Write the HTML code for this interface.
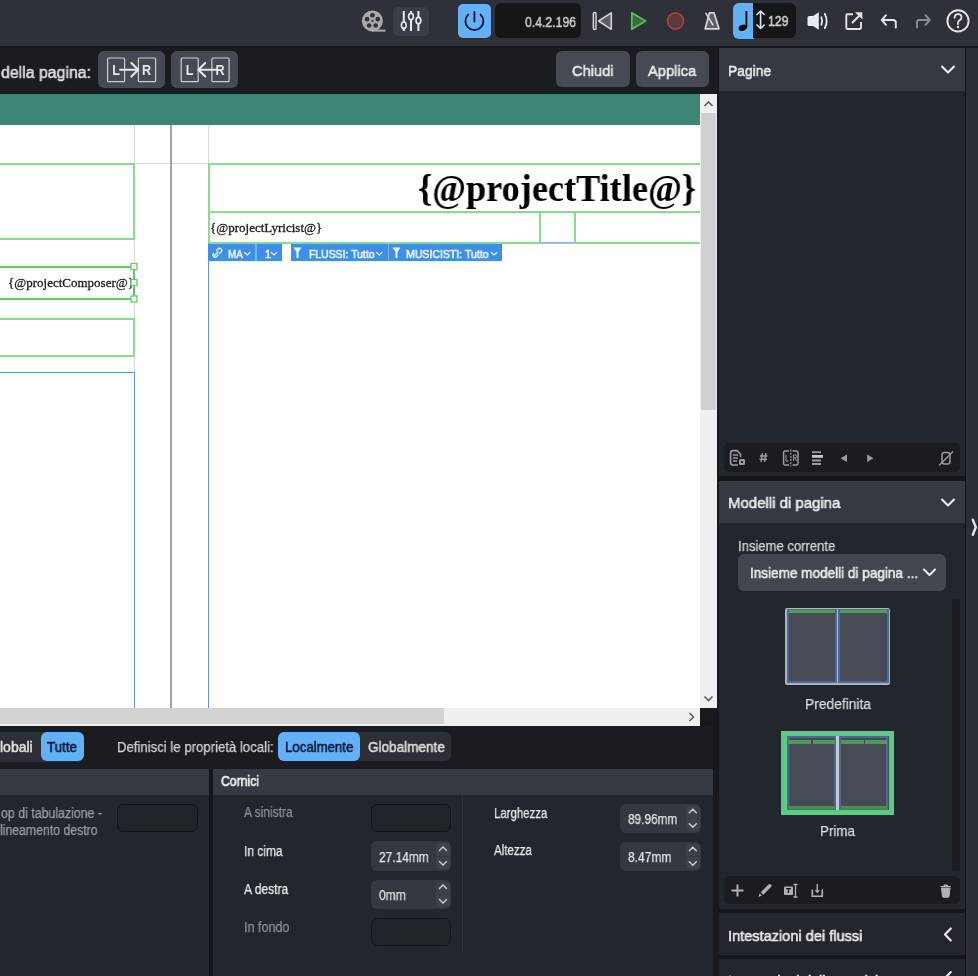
<!DOCTYPE html>
<html><head><meta charset="utf-8">
<style>
*{margin:0;padding:0;box-sizing:border-box}
html,body{width:978px;height:976px;overflow:hidden;background:#1b1d21;font-family:"Liberation Sans",sans-serif;color:#e6e6e6;position:relative}
.a{position:absolute}
.t{position:absolute;white-space:nowrap;line-height:1;transform-origin:0 0;will-change:transform}
svg{position:absolute;overflow:visible;will-change:transform}
</style></head><body>
<div class="a" style="left:0px;top:0px;width:978px;height:46px;background:#2e3138;"></div>
<div class="a" style="left:0px;top:46px;width:978px;height:2.2px;background:#15181b;"></div>
<div class="a" style="left:393px;top:6.5px;width:36px;height:29.5px;background:#3a3e46;border-radius:5px"></div>
<div class="a" style="left:458px;top:3.7px;width:33px;height:34.3px;background:#64b0f7;border-radius:5px"></div>
<div class="a" style="left:495px;top:3.3px;width:86px;height:35.1px;background:#151617;border-radius:6px"></div>
<div class="a" style="left:732.5px;top:2.9px;width:21px;height:36.4px;background:#64b0f7;border-radius:6px 0 0 6px"></div>
<div class="a" style="left:753.2px;top:3.3px;width:43.3px;height:35.1px;background:#151617;border-radius:0 6px 6px 0"></div>
<div class="a" style="left:0px;top:48px;width:717px;height:46px;background:#1a1c20;"></div>
<div class="a" style="left:98px;top:51.4px;width:67px;height:36.2px;background:#454a53;border-radius:6px"></div>
<div class="a" style="left:171.4px;top:51.4px;width:67px;height:36.2px;background:#454a53;border-radius:6px"></div>
<div class="a" style="left:556.2px;top:51.4px;width:73.4px;height:36.1px;background:#454a53;border-radius:6px"></div>
<div class="a" style="left:635.7px;top:51.4px;width:73.3px;height:36.1px;background:#454a53;border-radius:6px"></div>
<div class="a" style="left:0px;top:94px;width:700px;height:31px;background:#3e8576;"></div>
<div class="a" style="left:0px;top:125px;width:700px;height:583px;background:#ffffff;"></div>
<div class="a" style="left:133.5px;top:125px;width:1px;height:583px;background:#dadada;"></div>
<div class="a" style="left:208px;top:125px;width:1px;height:583px;background:#dadada;"></div>
<div class="a" style="left:0px;top:163px;width:700px;height:1px;background:#dadada;"></div>
<div class="a" style="left:170.4px;top:125px;width:1.5px;height:583px;background:#9fa4a4;"></div>
<div class="a" style="left:-5px;top:162.5px;width:140px;height:77.5px;background:transparent;border:2px solid #8cda8c"></div>
<div class="a" style="left:-5px;top:265.6px;width:140.3px;height:34.3px;background:transparent;border:2.3px solid #5ccc5c"></div>
<div class="a" style="left:-5px;top:318px;width:140px;height:38.5px;background:transparent;border:2px solid #8cda8c"></div>
<div class="a" style="left:-5px;top:372px;width:139.6px;height:400px;background:transparent;border:1.7px solid #5b95de"></div>
<div class="a" style="left:207.6px;top:162.5px;width:500px;height:50px;background:transparent;border:2px solid #8cda8c"></div>
<div class="a" style="left:207.6px;top:210.5px;width:500px;height:33.5px;background:transparent;border:2px solid #8cda8c"></div>
<div class="a" style="left:538.8px;top:211px;width:2px;height:32px;background:#8cda8c;"></div>
<div class="a" style="left:573.5px;top:211px;width:2px;height:32px;background:#8cda8c;"></div>
<div class="a" style="left:540.5px;top:241.9px;width:33.4px;height:1.6px;background:#8fb3e8;"></div>
<div class="a" style="left:207.8px;top:243px;width:1.5px;height:470px;background:#5b95de;"></div>
<div class="a" style="left:208.2px;top:244.1px;width:47.2px;height:16.6px;background:#3f8fe8;"></div>
<div class="a" style="left:255.4px;top:244.1px;width:1.6px;height:16.6px;background:#7ab0ee;"></div>
<div class="a" style="left:257px;top:244.1px;width:25.1px;height:16.6px;background:#3f8fe8;"></div>
<div class="a" style="left:290.5px;top:244.1px;width:97px;height:16.6px;background:#3f8fe8;"></div>
<div class="a" style="left:387.5px;top:244.1px;width:1.2px;height:16.6px;background:#7ab0ee;"></div>
<div class="a" style="left:388.7px;top:244.1px;width:113.3px;height:16.6px;background:#3f8fe8;"></div>
<div class="a" style="left:700px;top:94px;width:17px;height:614px;background:#efefef;"></div>
<div class="a" style="left:701px;top:113px;width:15px;height:297px;background:#d0d0d0;"></div>
<div class="a" style="left:717px;top:48px;width:2px;height:690px;background:#17191c;"></div>
<div class="a" style="left:0px;top:708px;width:700px;height:18px;background:#efefef;"></div>
<div class="a" style="left:0px;top:708px;width:444px;height:16px;background:#d3d3d3;"></div>
<div class="a" style="left:700px;top:708px;width:17px;height:18px;background:#181a1a;"></div>
<div class="a" style="left:0px;top:726px;width:719px;height:43px;background:#1a1c20;"></div>
<div class="a" style="left:-10px;top:732px;width:94px;height:29.5px;background:#2c2f36;border-radius:6px"></div>
<div class="a" style="left:41.1px;top:732px;width:42.7px;height:29.3px;background:#64b0f7;border-radius:6px"></div>
<div class="a" style="left:278.2px;top:731.8px;width:172.5px;height:29.7px;background:#2c2f36;border-radius:6px"></div>
<div class="a" style="left:278.2px;top:731.8px;width:82.1px;height:29.7px;background:#64b0f7;border-radius:6px"></div>
<div class="a" style="left:0px;top:769px;width:209px;height:26px;background:#353a42;"></div>
<div class="a" style="left:0px;top:795px;width:209px;height:181px;background:#22262d;"></div>
<div class="a" style="left:209px;top:769px;width:4px;height:207px;background:#141619;"></div>
<div class="a" style="left:213px;top:769px;width:500px;height:26px;background:#353a42;"></div>
<div class="a" style="left:213px;top:795px;width:500px;height:181px;background:#22262d;"></div>
<div class="a" style="left:713px;top:726px;width:6px;height:250px;background:#17191c;"></div>
<div class="a" style="left:462.2px;top:795px;width:1px;height:157px;background:#2f333a;"></div>
<div class="a" style="left:117px;top:804px;width:80.5px;height:28.4px;background:#202328;border:1.6px solid #121417;border-radius:6px"></div>
<div class="a" style="left:371px;top:804.3px;width:80px;height:27.7px;background:#202328;border:1.6px solid #121417;border-radius:6px"></div>
<div class="a" style="left:371px;top:918px;width:80px;height:28.3px;background:#202328;border:1.6px solid #121417;border-radius:6px"></div>
<div class="a" style="left:370.5px;top:841.4px;width:80.5px;height:29.5px;background:#343841;border-radius:6px"></div>
<div class="a" style="left:436.3px;top:843.4px;width:13.5px;height:12.5px;background:#3d4149;border-radius:4px 4px 0 0"></div>
<div class="a" style="left:436.3px;top:856.9px;width:13.5px;height:12px;background:#3d4149;border-radius:0 0 4px 4px"></div>
<div class="a" style="left:370.5px;top:879.6px;width:80.5px;height:29.5px;background:#343841;border-radius:6px"></div>
<div class="a" style="left:436.3px;top:881.6px;width:13.5px;height:12.5px;background:#3d4149;border-radius:4px 4px 0 0"></div>
<div class="a" style="left:436.3px;top:895.1px;width:13.5px;height:12px;background:#3d4149;border-radius:0 0 4px 4px"></div>
<div class="a" style="left:620.3px;top:803.8px;width:80.5px;height:29.5px;background:#343841;border-radius:6px"></div>
<div class="a" style="left:686.0999999999999px;top:805.8px;width:13.5px;height:12.5px;background:#3d4149;border-radius:4px 4px 0 0"></div>
<div class="a" style="left:686.0999999999999px;top:819.3px;width:13.5px;height:12px;background:#3d4149;border-radius:0 0 4px 4px"></div>
<div class="a" style="left:620.3px;top:841.7px;width:80.5px;height:29.5px;background:#343841;border-radius:6px"></div>
<div class="a" style="left:686.0999999999999px;top:843.7px;width:13.5px;height:12.5px;background:#3d4149;border-radius:4px 4px 0 0"></div>
<div class="a" style="left:686.0999999999999px;top:857.2px;width:13.5px;height:12px;background:#3d4149;border-radius:0 0 4px 4px"></div>
<div class="a" style="left:719px;top:48px;width:245.5px;height:43px;background:#353a42;"></div>
<div class="a" style="left:719px;top:91px;width:245.5px;height:385px;background:#22262d;"></div>
<div class="a" style="left:723.6px;top:443.4px;width:236px;height:29.1px;background:#1a1c20;border-radius:5px"></div>
<div class="a" style="left:719px;top:476px;width:245.5px;height:5px;background:#15171a;"></div>
<div class="a" style="left:719px;top:481px;width:245.5px;height:42px;background:#353a42;"></div>
<div class="a" style="left:719px;top:523px;width:245.5px;height:386px;background:#22262d;"></div>
<div class="a" style="left:738px;top:554.3px;width:207.6px;height:36.4px;background:#41464f;border-radius:6px"></div>
<div class="a" style="left:951.7px;top:598.6px;width:8.3px;height:272.2px;background:#1b1d21;"></div>
<div class="a" style="left:724px;top:876px;width:235.7px;height:27.7px;background:#1a1c20;border-radius:5px"></div>
<div class="a" style="left:719px;top:909px;width:245.5px;height:4px;background:#15171a;"></div>
<div class="a" style="left:719px;top:913px;width:245.5px;height:42px;background:#23262d;"></div>
<div class="a" style="left:719px;top:955px;width:245.5px;height:3.6px;background:#16181b;"></div>
<div class="a" style="left:719px;top:958.6px;width:245.5px;height:20px;background:#23262d;"></div>
<div class="a" style="left:964.5px;top:48px;width:1.7px;height:928px;background:#111316;"></div>
<div class="a" style="left:966.2px;top:48px;width:12px;height:928px;background:#2b2e35;"></div>
<div class="a" style="left:785.1px;top:607.6px;width:105.2px;height:77.3px;background:#464b56;border:2px solid #b0b3b8;border-radius:2px"></div>
<div class="a" style="left:836.5px;top:609px;width:2px;height:74px;background:#b8bbbf;"></div>
<div class="a" style="left:786.8px;top:609.4px;width:49.8px;height:73.8px;background:transparent;border:2px solid #4a6a9a"></div>
<div class="a" style="left:838.4px;top:609.4px;width:50.2px;height:73.8px;background:transparent;border:2px solid #4a6a9a"></div>
<div class="a" style="left:788.5px;top:610.4px;width:46.5px;height:3px;background:#4f9d5e;"></div>
<div class="a" style="left:840px;top:610.4px;width:47px;height:3px;background:#4f9d5e;"></div>
<div class="a" style="left:781.4px;top:730.8px;width:112.5px;height:84.3px;background:#5ccb85;"></div>
<div class="a" style="left:786.5px;top:736px;width:102px;height:74px;background:#464b56;"></div>
<div class="a" style="left:836.1px;top:736px;width:2.8px;height:74px;background:#c8c8c8;"></div>
<div class="a" style="left:786.5px;top:736px;width:49.6px;height:74px;background:transparent;border:2px solid #4a6a9a"></div>
<div class="a" style="left:838.9px;top:736px;width:49.6px;height:74px;background:transparent;border:2px solid #4a6a9a"></div>
<div class="a" style="left:788px;top:740px;width:23px;height:3.5px;background:#4e9a5c;"></div>
<div class="a" style="left:812.5px;top:740px;width:22px;height:3.5px;background:#4e9a5c;"></div>
<div class="a" style="left:840.5px;top:740px;width:23px;height:3.5px;background:#4e9a5c;"></div>
<div class="a" style="left:865px;top:740px;width:22px;height:3.5px;background:#4e9a5c;"></div>
<div class="a" style="left:788px;top:806.2px;width:46.5px;height:3.2px;background:#4e8a5c;"></div>
<div class="a" style="left:840.5px;top:806.2px;width:46.5px;height:3.2px;background:#4e8a5c;"></div>
<div class="t" style="left:525.00px;top:13.63px;font-family:'Liberation Sans',sans-serif;font-size:15.5px;font-weight:normal;color:#c8c8c8;-webkit-text-stroke:0.55px currentColor;transform:scaleX(0.7888);">0.4.2.196</div>
<div class="t" style="left:768.10px;top:14.28px;font-family:'Liberation Sans',sans-serif;font-size:14.5px;font-weight:normal;color:#d0d0d0;-webkit-text-stroke:0.55px currentColor;transform:scaleX(0.8429);">129</div>
<div class="t" style="left:0.80px;top:63.77px;font-family:'Liberation Sans',sans-serif;font-size:16.5px;font-weight:normal;color:#dedede;-webkit-text-stroke:0.55px currentColor;transform:scaleX(0.9618);">della pagina:</div>
<div class="t" style="left:571.80px;top:62.73px;font-family:'Liberation Sans',sans-serif;font-size:15.5px;font-weight:normal;color:#ebebeb;-webkit-text-stroke:0.55px currentColor;transform:scaleX(0.9442);">Chiudi</div>
<div class="t" style="left:648.20px;top:62.73px;font-family:'Liberation Sans',sans-serif;font-size:15.5px;font-weight:normal;color:#ebebeb;-webkit-text-stroke:0.55px currentColor;transform:scaleX(0.9480);">Applica</div>
<div class="t" style="left:727.90px;top:63.42px;font-family:'Liberation Sans',sans-serif;font-size:15.5px;font-weight:normal;color:#ebebeb;-webkit-text-stroke:0.55px currentColor;transform:scaleX(0.8909);">Pagine</div>
<div class="t" style="left:418.00px;top:169.99px;font-family:'Liberation Serif',serif;font-size:37px;font-weight:bold;color:#000;transform:scaleX(0.9802);">{@projectTitle@}</div>
<div class="t" style="left:209.70px;top:220.51px;font-family:'Liberation Serif',serif;font-size:13px;font-weight:normal;color:#1a1a1a;-webkit-text-stroke:0.3px #1a1a1a;">{@projectLyricist@}</div>
<div class="t" style="left:7.60px;top:276.01px;font-family:'Liberation Serif',serif;font-size:13px;font-weight:normal;color:#1a1a1a;-webkit-text-stroke:0.3px #1a1a1a;">{@projectComposer@}</div>
<div class="t" style="left:228.00px;top:248.55px;font-family:'Liberation Sans',sans-serif;font-size:11px;font-weight:normal;color:#f0f6ff;-webkit-text-stroke:0.55px currentColor;transform:scaleX(0.8909);">MA</div>
<div class="t" style="left:264.80px;top:248.55px;font-family:'Liberation Sans',sans-serif;font-size:11px;font-weight:normal;color:#f0f6ff;-webkit-text-stroke:0.55px currentColor;">1</div>
<div class="t" style="left:309.00px;top:248.55px;font-family:'Liberation Sans',sans-serif;font-size:11px;font-weight:normal;color:#f0f6ff;-webkit-text-stroke:0.55px currentColor;transform:scaleX(0.9480);">FLUSSI: Tutto</div>
<div class="t" style="left:406.40px;top:248.55px;font-family:'Liberation Sans',sans-serif;font-size:11px;font-weight:normal;color:#f0f6ff;-webkit-text-stroke:0.55px currentColor;transform:scaleX(0.9584);">MUSICISTI: Tutto</div>
<div class="t" style="left:0.40px;top:740.20px;font-family:'Liberation Sans',sans-serif;font-size:14px;font-weight:normal;color:#dcdcdc;-webkit-text-stroke:0.55px currentColor;">lobali</div>
<div class="t" style="left:47.20px;top:740.20px;font-family:'Liberation Sans',sans-serif;font-size:14px;font-weight:normal;color:#0b1a3a;-webkit-text-stroke:0.55px currentColor;transform:scaleX(0.9557);">Tutte</div>
<div class="t" style="left:116.80px;top:740.07px;font-family:'Liberation Sans',sans-serif;font-size:14.5px;font-weight:normal;color:#d4d4d4;-webkit-text-stroke:0.25px currentColor;transform:scaleX(0.9080);">Definisci le proprietà locali:</div>
<div class="t" style="left:285.20px;top:739.88px;font-family:'Liberation Sans',sans-serif;font-size:14.5px;font-weight:normal;color:#0b1a3a;-webkit-text-stroke:0.55px currentColor;transform:scaleX(0.9110);">Localmente</div>
<div class="t" style="left:367.50px;top:739.88px;font-family:'Liberation Sans',sans-serif;font-size:14.5px;font-weight:normal;color:#dcdcdc;-webkit-text-stroke:0.55px currentColor;transform:scaleX(0.9341);">Globalmente</div>
<div class="t" style="left:0.70px;top:806.10px;font-family:'Liberation Sans',sans-serif;font-size:14px;font-weight:normal;color:#9a9ea5;-webkit-text-stroke:0.25px currentColor;transform:scaleX(0.8827);">op di tabulazione -</div>
<div class="t" style="left:-0.30px;top:822.80px;font-family:'Liberation Sans',sans-serif;font-size:14px;font-weight:normal;color:#9a9ea5;-webkit-text-stroke:0.25px currentColor;transform:scaleX(0.8760);">lineamento destro</div>
<div class="t" style="left:220.50px;top:774.10px;font-family:'Liberation Sans',sans-serif;font-size:14px;font-weight:normal;color:#ebebeb;-webkit-text-stroke:0.55px currentColor;transform:scaleX(0.8720);-webkit-text-stroke:0.7px currentColor;">Cornici</div>
<div class="t" style="left:243.80px;top:805.30px;font-family:'Liberation Sans',sans-serif;font-size:14px;font-weight:normal;color:#8c9096;-webkit-text-stroke:0.25px currentColor;transform:scaleX(0.8572);">A sinistra</div>
<div class="t" style="left:244.00px;top:843.50px;font-family:'Liberation Sans',sans-serif;font-size:14px;font-weight:normal;color:#ebebeb;-webkit-text-stroke:0.25px currentColor;transform:scaleX(0.8554);">In cima</div>
<div class="t" style="left:244.00px;top:881.50px;font-family:'Liberation Sans',sans-serif;font-size:14px;font-weight:normal;color:#ebebeb;-webkit-text-stroke:0.25px currentColor;transform:scaleX(0.8603);">A destra</div>
<div class="t" style="left:244.00px;top:919.80px;font-family:'Liberation Sans',sans-serif;font-size:14px;font-weight:normal;color:#8c9096;-webkit-text-stroke:0.25px currentColor;transform:scaleX(0.8990);">In fondo</div>
<div class="t" style="left:378.60px;top:850.27px;font-family:'Liberation Sans',sans-serif;font-size:14.5px;font-weight:normal;color:#e2e2e2;-webkit-text-stroke:0.25px currentColor;transform:scaleX(0.8221);">27.14mm</div>
<div class="t" style="left:378.60px;top:888.07px;font-family:'Liberation Sans',sans-serif;font-size:14.5px;font-weight:normal;color:#e2e2e2;-webkit-text-stroke:0.25px currentColor;transform:scaleX(0.8283);">0mm</div>
<div class="t" style="left:494.30px;top:805.90px;font-family:'Liberation Sans',sans-serif;font-size:14px;font-weight:normal;color:#ebebeb;-webkit-text-stroke:0.25px currentColor;transform:scaleX(0.8166);">Larghezza</div>
<div class="t" style="left:494.30px;top:843.30px;font-family:'Liberation Sans',sans-serif;font-size:14px;font-weight:normal;color:#ebebeb;-webkit-text-stroke:0.25px currentColor;transform:scaleX(0.8275);">Altezza</div>
<div class="t" style="left:628.40px;top:811.67px;font-family:'Liberation Sans',sans-serif;font-size:14.5px;font-weight:normal;color:#e2e2e2;-webkit-text-stroke:0.25px currentColor;transform:scaleX(0.8155);">89.96mm</div>
<div class="t" style="left:628.40px;top:849.67px;font-family:'Liberation Sans',sans-serif;font-size:14.5px;font-weight:normal;color:#e2e2e2;-webkit-text-stroke:0.25px currentColor;transform:scaleX(0.8284);">8.47mm</div>
<div class="t" style="left:727.90px;top:495.12px;font-family:'Liberation Sans',sans-serif;font-size:15.5px;font-weight:normal;color:#ebebeb;-webkit-text-stroke:0.55px currentColor;transform:scaleX(0.9654);">Modelli di pagina</div>
<div class="t" style="left:737.90px;top:538.90px;font-family:'Liberation Sans',sans-serif;font-size:14px;font-weight:normal;color:#d8d8d8;-webkit-text-stroke:0.25px currentColor;transform:scaleX(0.9331);">Insieme corrente</div>
<div class="t" style="left:750.30px;top:565.97px;font-family:'Liberation Sans',sans-serif;font-size:14.5px;font-weight:normal;color:#ebebeb;-webkit-text-stroke:0.55px currentColor;transform:scaleX(0.9346);">Insieme modelli di pagina ...</div>
<div class="t" style="left:804.80px;top:696.15px;font-family:'Liberation Sans',sans-serif;font-size:15px;font-weight:normal;color:#dcdcdc;-webkit-text-stroke:0.25px currentColor;transform:scaleX(0.9203);">Predefinita</div>
<div class="t" style="left:820.20px;top:823.05px;font-family:'Liberation Sans',sans-serif;font-size:15px;font-weight:normal;color:#dcdcdc;-webkit-text-stroke:0.25px currentColor;transform:scaleX(0.8935);">Prima</div>
<div class="t" style="left:727.90px;top:928.25px;font-family:'Liberation Sans',sans-serif;font-size:15px;font-weight:normal;color:#ebebeb;-webkit-text-stroke:0.55px currentColor;transform:scaleX(0.9711);">Intestazioni dei flussi</div>
<div class="t" style="left:727.90px;top:972.75px;font-family:'Liberation Sans',sans-serif;font-size:15px;font-weight:normal;color:#ebebeb;-webkit-text-stroke:0.55px currentColor;transform:scaleX(0.9418);">Intestazioni delle cornici</div>
<svg width="978" height="976" style="left:0;top:0"><circle cx="372.4" cy="20.9" r="10.5" fill="#a9a9a9"/><circle cx="372.40" cy="15.30" r="2.3" fill="#2e3138"/><circle cx="377.73" cy="19.17" r="2.3" fill="#2e3138"/><circle cx="375.69" cy="25.43" r="2.3" fill="#2e3138"/><circle cx="369.11" cy="25.43" r="2.3" fill="#2e3138"/><circle cx="367.07" cy="19.17" r="2.3" fill="#2e3138"/><circle cx="372.4" cy="20.9" r="1.1" fill="#2e3138"/><rect x="372" y="29.6" width="13.5" height="2" fill="#a9a9a9"/><line x1="403.8" y1="11" x2="403.8" y2="31" stroke="#e8eef5" stroke-width="2"/><ellipse cx="403.8" cy="25.2" rx="2.4" ry="3.2" fill="#3a3e46" stroke="#e8eef5" stroke-width="1.6"/><line x1="411" y1="11" x2="411" y2="31" stroke="#e8eef5" stroke-width="2"/><ellipse cx="411" cy="16.6" rx="2.4" ry="3.2" fill="#3a3e46" stroke="#e8eef5" stroke-width="1.6"/><line x1="418.4" y1="11" x2="418.4" y2="31" stroke="#e8eef5" stroke-width="2"/><ellipse cx="418.4" cy="20.6" rx="2.4" ry="3.2" fill="#3a3e46" stroke="#e8eef5" stroke-width="1.6"/><path d="M468.2 14.6 A9 9 0 1 0 480.6 14.6" fill="none" stroke="#0d1a3a" stroke-width="1.9" stroke-linecap="round"/><line x1="474.4" y1="12" x2="474.4" y2="21.5" stroke="#0d1a3a" stroke-width="1.9" stroke-linecap="round"/><rect x="593.3" y="12.5" width="2.8" height="17" rx="1.2" fill="#4d5157" stroke="#d4d4d4" stroke-width="1.4"/><path d="M598.6 21 L611.3 12.8 L611.3 29.3 Z" fill="#5b5f65" stroke="#d4d4d4" stroke-width="1.6" stroke-linejoin="round"/><path d="M631.8 12.8 L645.5 21 L631.8 29.3 Z" fill="#3e6a45" stroke="#52c152" stroke-width="1.8" stroke-linejoin="round"/><circle cx="675.5" cy="21" r="8" fill="#583b3f" stroke="#bd3c3c" stroke-width="1.5"/><path d="M709.5 12.8 L714 12.8 L719 28.8 L705.2 28.8 Z" fill="#5c5f64" stroke="#d8d8d8" stroke-width="1.7" stroke-linejoin="round"/><line x1="706" y1="13.3" x2="712.8" y2="24.8" stroke="#d8d8d8" stroke-width="1.6" stroke-linecap="round"/><line x1="746.4" y1="11" x2="746.4" y2="27.5" stroke="#000" stroke-width="1.8"/><ellipse cx="742.6" cy="27.7" rx="4.2" ry="2.9" transform="rotate(-22 742.6 27.7)" fill="#000"/><path d="M760.6 11 V28.5 M757 14.5 L760.6 11 L764.2 14.5 M757 25 L760.6 28.5 L764.2 25" fill="none" stroke="#e0e0e0" stroke-width="1.6" stroke-linecap="round" stroke-linejoin="round"/><path d="M807.5 17.5 Q807.5 16 809 16 L813 16 L818.8 12.3 L818.8 29.8 L813 26 L809 26 Q807.5 26 807.5 24.5 Z" fill="#e8ecf0"/><path d="M821.3 17.2 Q823 21 821.3 24.8" fill="none" stroke="#e8ecf0" stroke-width="1.8" stroke-linecap="round"/><path d="M824.8 13.8 Q828.6 21 824.8 28.2" fill="none" stroke="#e8ecf0" stroke-width="1.8" stroke-linecap="round"/><path d="M853 14.3 L847.5 14.3 Q846.3 14.3 846.3 15.5 L846.3 27.8 Q846.3 29 847.5 29 L859.8 29 Q861 29 861 27.8 L861 22" fill="none" stroke="#e4e4e4" stroke-width="1.9"/><line x1="852" y1="23" x2="859.5" y2="15.5" stroke="#e4e4e4" stroke-width="1.9"/><path d="M855 12.3 L862.3 12.3 L862.3 19.6 Z" fill="#e4e4e4"/><path d="M886 15.2 L881.8 20 L886 24.8 M882.5 20 L893 20 Q895.8 20 895.8 22.8 L895.8 27.5" fill="none" stroke="#e4e8ee" stroke-width="1.9" stroke-linecap="round" stroke-linejoin="round"/><path d="M925.5 15.2 L929.7 20 L925.5 24.8 M929 20 L919 20 Q917 20 917 22 L917 27.5" fill="none" stroke="#8b8e93" stroke-width="1.9" stroke-linecap="round" stroke-linejoin="round"/><circle cx="958" cy="20.9" r="10.6" fill="none" stroke="#e6e6e6" stroke-width="1.9"/><path d="M954.6 17.8 Q954.6 14.2 958 14.2 Q961.5 14.2 961.5 17.4 Q961.5 19.4 959.4 20.4 Q958 21.2 958 23.2 L958 24" fill="none" stroke="#e6e6e6" stroke-width="1.8" stroke-linecap="round"/><circle cx="958" cy="27" r="1.2" fill="#e6e6e6"/><rect x="107.6" y="58" width="17" height="23.7" rx="1" fill="none" stroke="#cfcfcf" stroke-width="1.2"/><rect x="138.4" y="58" width="17.2" height="23.7" rx="1" fill="none" stroke="#cfcfcf" stroke-width="1.2"/><text x="112.19999999999999" y="75.3" font-family="Liberation Sans" font-weight="bold" font-size="14" transform="translate(112.19999999999999 0) scale(0.9 1) translate(-112.19999999999999 0)" fill="#e6e6e6">L</text><text x="142.0" y="75.3" font-family="Liberation Sans" font-weight="bold" font-size="14" transform="translate(142.0 0) scale(0.9 1) translate(-142.0 0)" fill="#e6e6e6">R</text><path d="M120.1 69.8 H137.6 M131.4 63 L138.20000000000002 69.8 L131.4 76.6" fill="none" stroke="#e6e6e6" stroke-width="2.1" stroke-linecap="round" stroke-linejoin="round"/><rect x="181.2" y="58" width="17" height="23.7" rx="1" fill="none" stroke="#cfcfcf" stroke-width="1.2"/><rect x="211.9" y="58" width="17.2" height="23.7" rx="1" fill="none" stroke="#cfcfcf" stroke-width="1.2"/><text x="185.79999999999998" y="75.3" font-family="Liberation Sans" font-weight="bold" font-size="14" transform="translate(185.79999999999998 0) scale(0.9 1) translate(-185.79999999999998 0)" fill="#e6e6e6">L</text><text x="215.5" y="75.3" font-family="Liberation Sans" font-weight="bold" font-size="14" transform="translate(215.5 0) scale(0.9 1) translate(-215.5 0)" fill="#e6e6e6">R</text><path d="M217.4 69.8 H199.0 M205.2 63 L198.39999999999998 69.8 L205.2 76.6" fill="none" stroke="#e6e6e6" stroke-width="2.1" stroke-linecap="round" stroke-linejoin="round"/><path d="M942 66.5 L948 72.5 L954 66.5" fill="none" stroke="#ececec" stroke-width="2.1" stroke-linecap="round" stroke-linejoin="round"/><path d="M942 499.5 L948 505.5 L954 499.5" fill="none" stroke="#ececec" stroke-width="2.1" stroke-linecap="round" stroke-linejoin="round"/><path d="M924 569.5 L929.5 575 L935 569.5" fill="none" stroke="#ececec" stroke-width="2.1" stroke-linecap="round" stroke-linejoin="round"/><path d="M950.8 928.4 L945 934.4 L950.8 940.4" fill="none" stroke="#ececec" stroke-width="2.1" stroke-linecap="round" stroke-linejoin="round"/><path d="M950.8 972 L945 978 L950.8 984" fill="none" stroke="#ececec" stroke-width="2.1" stroke-linecap="round" stroke-linejoin="round"/><path d="M972.8 519.8 L975.8 527.3 L972.8 534.8" fill="none" stroke="#e6e6e6" stroke-width="2.4" stroke-linecap="round" stroke-linejoin="round"/><path d="M704.5 106 L708.5 102 L712.5 106" fill="none" stroke="#5e5e5e" stroke-width="1.6"/><path d="M704.5 696.5 L708.5 700.5 L712.5 696.5" fill="none" stroke="#5e5e5e" stroke-width="1.6"/><path d="M689.5 713 L693.5 717 L689.5 721" fill="none" stroke="#5e5e5e" stroke-width="1.6"/><path d="M439.5 850.4 L443.0 846.9 L446.5 850.4" fill="none" stroke="#d0d0d0" stroke-width="1.4" stroke-linecap="round"/><path d="M439.5 861.4 L443.0 864.9 L446.5 861.4" fill="none" stroke="#d0d0d0" stroke-width="1.4" stroke-linecap="round"/><path d="M439.5 888.6 L443.0 885.1 L446.5 888.6" fill="none" stroke="#d0d0d0" stroke-width="1.4" stroke-linecap="round"/><path d="M439.5 899.6 L443.0 903.1 L446.5 899.6" fill="none" stroke="#d0d0d0" stroke-width="1.4" stroke-linecap="round"/><path d="M689.3 812.8 L692.8 809.3 L696.3 812.8" fill="none" stroke="#d0d0d0" stroke-width="1.4" stroke-linecap="round"/><path d="M689.3 823.8 L692.8 827.3 L696.3 823.8" fill="none" stroke="#d0d0d0" stroke-width="1.4" stroke-linecap="round"/><path d="M689.3 850.7 L692.8 847.2 L696.3 850.7" fill="none" stroke="#d0d0d0" stroke-width="1.4" stroke-linecap="round"/><path d="M689.3 861.7 L692.8 865.2 L696.3 861.7" fill="none" stroke="#d0d0d0" stroke-width="1.4" stroke-linecap="round"/><rect x="131" y="263.5" width="6" height="6" fill="#fff" stroke="#62cf62" stroke-width="1.3"/><rect x="131" y="279.5" width="6" height="6" fill="#fff" stroke="#62cf62" stroke-width="1.3"/><rect x="131" y="296" width="6" height="6" fill="#fff" stroke="#62cf62" stroke-width="1.3"/><path d="M214.5 255.5 L218 252 M213.5 253.5 Q212 255 213.5 256.5 Q215 258 216.5 256.5 L218 255 M216.5 250.5 L218 249 Q219.5 247.5 221 249 Q222.5 250.5 221 252 L219.5 253.5" fill="none" stroke="#eef4ff" stroke-width="1.3" stroke-linecap="round"/><path d="M244.2 252.3 L247.2 255 L250.2 252.3" fill="none" stroke="#eef4ff" stroke-width="1.2"/><path d="M271 252.3 L274 255 L277 252.3" fill="none" stroke="#eef4ff" stroke-width="1.2"/><path d="M376.2 252.3 L379.2 255 L382.2 252.3" fill="none" stroke="#eef4ff" stroke-width="1.2"/><path d="M491 252.3 L494 255 L497 252.3" fill="none" stroke="#eef4ff" stroke-width="1.2"/><path d="M293.5 247.5 L301.5 247.5 L298.5 252 L298.5 258 L296.5 258 L296.5 252 Z" fill="#eef4ff"/><path d="M392.5 247.5 L400.5 247.5 L397.5 252 L397.5 258 L395.5 258 L395.5 252 Z" fill="#eef4ff"/><path d="M733 450.6 L737 450.6 L740.5 454 L740.5 457 M733 450.6 Q730.6 450.6 730.6 453 L730.6 462.6 Q730.6 465 733 465 L738 465" fill="none" stroke="#999da3" stroke-width="1.6"/><path d="M733 455 H738 M733 458 H738 M733 461 H737" stroke="#999da3" stroke-width="1.3"/><rect x="739" y="459" width="6" height="6" rx="1.5" fill="#999da3"/><rect x="741" y="461" width="2" height="2" fill="#1a1c20"/><path d="M762.3 453 L761.2 462 M765.8 453 L764.7 462 M760 456 H767.5 M759.5 459.3 H767" stroke="#999da3" stroke-width="1.5"/><path d="M789 451 H785 Q783.6 451 783.6 452.4 V463.6 Q783.6 465 785 465 H789 M792.6 451 H796.6 Q798 451 798 452.4 V463.6 Q798 465 796.6 465 H792.6" fill="none" stroke="#999da3" stroke-width="1.5"/><path d="M790.8 449.5 V466.5" stroke="#999da3" stroke-width="1.2" stroke-dasharray="2 1.2"/><path d="M786 455 V461 H788.5 M793.5 461 V455 H795.5 Q796.5 455 796.5 456.5 Q796.5 458 795 458 L793.5 458 M795 458 L796.5 461" fill="none" stroke="#999da3" stroke-width="1"/><rect x="812" y="451.3" width="9" height="1.8" fill="#999da3"/><rect x="812" y="455" width="11" height="2.8" fill="#c2c5ca"/><rect x="812" y="459.5" width="9" height="2" fill="#999da3"/><rect x="812" y="463" width="9" height="2" fill="#999da3"/><path d="M847 454.4 L840.6 458.2 L847 462 Z" fill="#999da3"/><path d="M867.2 454.4 L873.4 458.2 L867.2 462 Z" fill="#999da3"/><rect x="942" y="452.5" width="8" height="11.5" rx="2.5" fill="none" stroke="#999da3" stroke-width="1.5"/><line x1="939" y1="465.5" x2="953" y2="451.5" stroke="#999da3" stroke-width="1.4"/><path d="M737.5 884.5 V896.5 M731.5 890.5 H743.5" stroke="#aeb1b6" stroke-width="2"/><path d="M758.5 897 L759.6 893.2 L761.8 895.4 Z" fill="#aeb1b6"/><path d="M760.8 892.2 L768.5 884.5 Q769.8 883.3 771 884.5 Q772.2 885.7 771 887 L763.3 894.7 Z" fill="#aeb1b6"/><rect x="784" y="886.5" width="9" height="8.5" rx="1" fill="#aeb1b6"/><path d="M786 888.6 H791 M788.5 888.6 V893" stroke="#1a1c20" stroke-width="1.4"/><path d="M795.5 884.5 V897 M793.5 884.5 H797.5 M793.5 897 H797.5" stroke="#aeb1b6" stroke-width="1.3"/><path d="M812.3 889.5 V896.3 H822.3 V889.5" fill="none" stroke="#aeb1b6" stroke-width="1.6"/><path d="M817.3 884 V891" stroke="#aeb1b6" stroke-width="1.5"/><path d="M814.6 890.3 L817.3 893.3 L820 890.3 Z" fill="#aeb1b6"/><path d="M940.5 886.5 H951 M944 886.5 V885 H947.5 V886.5 M941.5 888 L942.5 896.5 Q942.6 897.3 943.5 897.3 L948 897.3 Q948.9 897.3 949 896.5 L950 888 Z" fill="#aeb1b6" stroke="#aeb1b6" stroke-width="1"/></svg>
</body></html>
